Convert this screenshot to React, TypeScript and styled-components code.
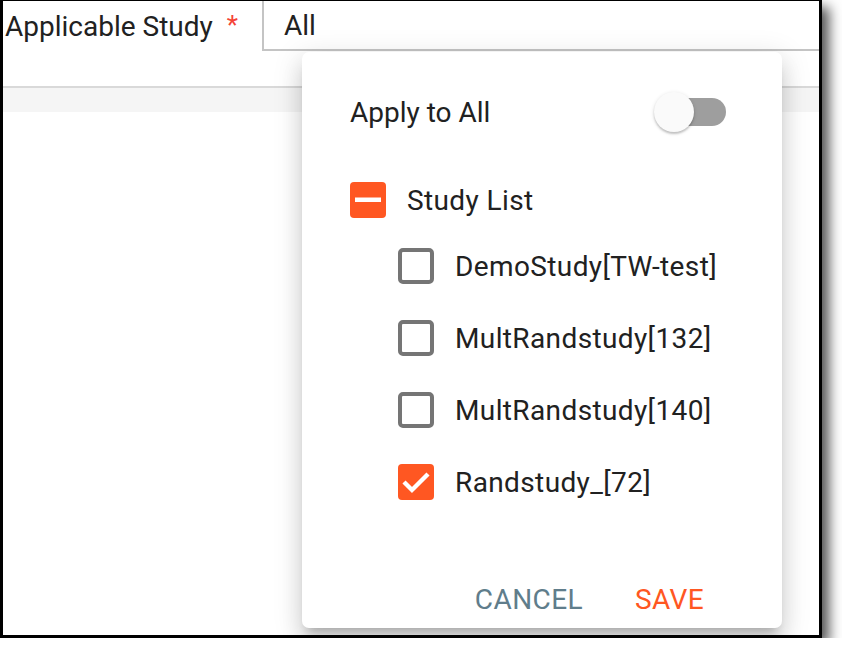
import React from "react";
import styled, { createGlobalStyle } from "styled-components";

const Global = createGlobalStyle`
  html, body { margin: 0; padding: 0; background: #ffffff; }
  body { font-family: Roboto, "Noto Sans", Arial, sans-serif; }
  * { box-sizing: border-box; }
`;

const Frame = styled.div`
  position: relative;
  width: 822px;
  height: 638px;
  border-style: solid;
  border-color: #000;
  border-width: 1px 3px 3px 3px;
  background: #fff;
  overflow: hidden;
  box-shadow: 7px 7px 12px rgba(0, 0, 0, 0.68);
`;

const FieldRow = styled.div`
  display: flex;
  align-items: stretch;
  height: 50px;
`;

const Label = styled.div`
  width: 259px;
  flex: none;
  padding-left: 2px;
  display: flex;
  align-items: center;
  font-size: 28px;
  color: #212121;
  white-space: nowrap;
`;

const Req = styled.span`
  color: #f44336;
  font-size: 26px;
  margin-left: 14px;
  position: relative;
  top: -1px;
`;

const InputBox = styled.div`
  flex: 1;
  display: flex;
  align-items: center;
  padding-left: 20px;
  border-left: 2px solid #c4c4c4;
  border-bottom: 2px solid #c4c4c4;
  font-size: 28px;
  color: #212121;
`;

const Divider = styled.div`
  margin-top: 35px;
  height: 2px;
  background: #d9d9d9;
`;

const Band = styled.div`
  height: 24px;
  background: #f5f5f5;
`;

const Popup = styled.div`
  position: absolute;
  left: 299px;
  top: 51px;
  width: 480px;
  height: 576px;
  background: #fff;
  border-radius: 7px;
  box-shadow: 0 10px 10px -6px rgba(0, 0, 0, 0.2),
    0 16px 20px 2px rgba(0, 0, 0, 0.1), 0 6px 28px 4px rgba(0, 0, 0, 0.1);
  display: flex;
  flex-direction: column;
  padding-top: 32px;
`;

const ApplyRow = styled.div`
  display: flex;
  align-items: center;
  justify-content: space-between;
  height: 56px;
  padding: 0 56px 0 48px;
  font-size: 28px;
  color: #212121;
`;

const Switch = styled.div`
  position: relative;
  width: 72px;
  height: 40px;
  display: flex;
  align-items: center;
  justify-content: flex-end;
`;

const Track = styled.div`
  width: 68px;
  height: 28px;
  border-radius: 14px;
  background: #9e9e9e;
`;

const Thumb = styled.div`
  position: absolute;
  left: 0;
  top: 0;
  width: 40px;
  height: 40px;
  border-radius: 50%;
  background: #fafafa;
  box-shadow: 0 2px 2px rgba(0, 0, 0, 0.18), 0 1px 4px rgba(0, 0, 0, 0.12);
`;

const List = styled.div`
  margin-top: 30px;
  display: flex;
  flex-direction: column;
`;

const Row = styled.div<{ $indent: number; $h: number }>`
  display: flex;
  align-items: center;
  gap: 21px;
  height: ${(p) => p.$h}px;
  padding-left: ${(p) => 48 + p.$indent}px;
  font-size: 28px;
  letter-spacing: 0.38px;
  color: #212121;
  white-space: nowrap;
`;

const Actions = styled.div`
  margin-top: 53px;
  height: 56px;
  display: flex;
  align-items: center;
  justify-content: flex-end;
  gap: 52px;
  padding-right: 78px;
`;

const TextButton = styled.button<{ $color: string }>`
  border: none;
  background: none;
  padding: 0;
  font-family: Roboto, "Noto Sans", Arial, sans-serif;
  font-size: 28px;
  font-weight: 400;
  letter-spacing: 0.4px;
  color: ${(p) => p.$color};
  cursor: pointer;
`;

type State = "off" | "on" | "mixed";

const Box = ({ state }: { state: State }) => {
  if (state === "off") {
    return (
      <svg width="36" height="36" viewBox="0 0 36 36">
        <rect x="2" y="2" width="32" height="32" rx="3" fill="none" stroke="#757575" strokeWidth="4" />
      </svg>
    );
  }
  return (
    <svg width="36" height="36" viewBox="0 0 36 36">
      <rect x="0" y="0" width="36" height="36" rx="4" fill="#ff5722" />
      {state === "mixed" ? (
        <rect x="5" y="15.5" width="26" height="4.5" fill="#fff" />
      ) : (
        <path d="M6 18 L14 26 L30 10" fill="none" stroke="#fff" strokeWidth="4.4" />
      )}
    </svg>
  );
};

const studies: { name: string; state: State }[] = [
  { name: "DemoStudy[TW-test]", state: "off" },
  { name: "MultRandstudy[132]", state: "off" },
  { name: "MultRandstudy[140]", state: "off" },
  { name: "Randstudy_[72]", state: "on" },
];

export default function App() {
  return (
    <>
      <Global />
      <Frame>
        <FieldRow>
          <Label>
            Applicable Study<Req>*</Req>
          </Label>
          <InputBox>All</InputBox>
        </FieldRow>
        <Divider />
        <Band />
        <Popup>
          <ApplyRow>
            <span>Apply to All</span>
            <Switch>
              <Track />
              <Thumb />
            </Switch>
          </ApplyRow>
          <List>
            <Row $indent={0} $h={60}>
              <Box state="mixed" />
              <span>Study List</span>
            </Row>
            {studies.map((s) => (
              <Row key={s.name} $indent={48} $h={72}>
                <Box state={s.state} />
                <span>{s.name}</span>
              </Row>
            ))}
          </List>
          <Actions>
            <TextButton $color="#607d8b">CANCEL</TextButton>
            <TextButton $color="#ff5722">SAVE</TextButton>
          </Actions>
        </Popup>
      </Frame>
    </>
  );
}
